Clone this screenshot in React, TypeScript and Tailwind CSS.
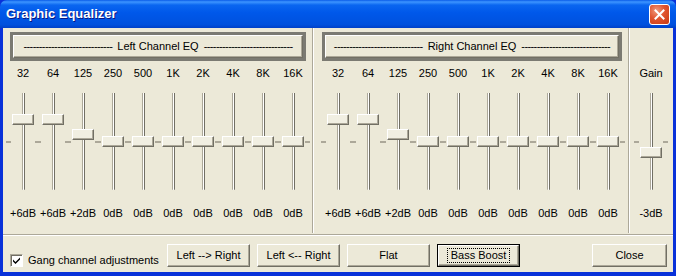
import React from 'react';

const FREQS = ['32', '64', '125', '250', '500', '1K', '2K', '4K', '8K', '16K'];
const LEFT = [6, 6, 2, 0, 0, 0, 0, 0, 0, 0];
const RIGHT = [6, 6, 2, 0, 0, 0, 0, 0, 0, 0];

function fmt(db: number) {
  return db > 0 ? `+${db}dB` : `${db}dB`;
}

function Slider({ label, db }: { label: string; db: number }) {
  // track 97px, thumb 11px, ±12dB
  const top = 43 - db * (44 / 12);
  return (
    <div className="flex flex-col items-center w-[30px]">
      <div className="h-[12px] leading-[12px]">{label}</div>
      <div className="relative mt-[14px] h-[97px] w-[30px]">
        <div className="absolute left-[14px] top-0 h-full w-[3px] border-l border-l-[#aca899] border-r border-r-[#716f64] bg-white rounded-b-[1px]" />
        <div className="absolute left-[-2px] top-[48px] h-[2px] w-[5px] bg-[#aca899]" />
        <div className="absolute right-[-2px] top-[48px] h-[2px] w-[5px] bg-[#aca899]" />
        <div
          className="absolute left-[4px] h-[11px] w-[22px] bg-[#f1efe2] border-t border-l border-t-white border-l-white border-b border-r border-b-[#716f64] border-r-[#716f64] shadow-[inset_-1px_-1px_0_#aca899]"
          style={{ top }}
        />
      </div>
      <div className="mt-[17px] h-[12px] leading-[12px]">{fmt(db)}</div>
    </div>
  );
}

function HeaderBox({ title, w }: { title: string; w: string }) {
  const dashes = '-----------------------------';
  return (
    <div className={`mt-[4px] h-[29px] border-[3px] border-[#7b7a72] ${w}`}>
      <div className="h-full w-full flex items-center justify-center gap-[5px] border-t border-l border-white border-b border-r border-b-[#716f64] border-r-[#716f64] shadow-[inset_-1px_-1px_0_#aca899] whitespace-nowrap">
        <span className="tracking-[-0.6px]">{dashes}</span>
        <span>{title}</span>
        <span className="tracking-[-0.6px]">{dashes}</span>
      </div>
    </div>
  );
}

function Btn({ children, w = 'w-[83px]', def = false }: { children: React.ReactNode; w?: string; def?: boolean }) {
  return (
    <div className={`h-[23px] ${w} ${def ? 'border border-black' : ''}`}>
      <div className="h-full w-full flex items-center justify-center border-t border-l border-white border-b border-r border-b-[#716f64] border-r-[#716f64] shadow-[inset_-1px_-1px_0_#aca899] bg-[#ece9d8]">
        {def ? (
          <span className="border border-dotted border-black px-[3px] leading-[13px]">{children}</span>
        ) : (
          <span>{children}</span>
        )}
      </div>
    </div>
  );
}

export default function App() {
  return (
    <div className="w-[676px] h-[276px] flex flex-col text-[11px] text-black bg-[#0831d9]" style={{ fontFamily: '"Liberation Sans", Arial, sans-serif' }}>
      {/* Title bar */}
      <div className="h-[28px] flex items-center justify-between pl-[6px] pr-[6px] rounded-t-[7px] bg-[linear-gradient(to_bottom,#0a5ce8_0%,#3d95ff_7%,#0a66f0_18%,#0058ea_45%,#0054e3_70%,#0050dd_88%,#0040c8_100%)]">
        <span className="text-white font-bold text-[13px] [text-shadow:1px_1px_0_#0a1883]">Graphic Equalizer</span>
        <div className="w-[21px] h-[21px] rounded-[3px] border border-white bg-[radial-gradient(circle_at_35%_30%,#f09a7c_0%,#e0542f_45%,#c83a12_100%)] flex items-center justify-center">
          <svg width="11" height="11" viewBox="0 0 11 11">
            <path d="M1.5 1.5 L9.5 9.5 M9.5 1.5 L1.5 9.5" stroke="white" strokeWidth="2" strokeLinecap="square" />
          </svg>
        </div>
      </div>

      {/* Client area */}
      <div className="flex-1 ml-[3px] mr-[3px] mb-[4px] bg-[#ece9d8] flex flex-col">
        <div className="h-[206px] flex">
          {/* Left panel */}
          <div className="w-[309px] flex flex-col">
            <div className="ml-[7px]">
              <HeaderBox title="Left Channel EQ" w="w-[296px]" />
            </div>
            <div className="flex mt-[6px] pl-[5px]">
              {FREQS.map((f, i) => (
                <Slider key={f} label={f} db={LEFT[i]} />
              ))}
            </div>
          </div>
          <div className="w-[2px] mb-[1px] border-l border-l-[#aca899] border-r border-r-white" />
          {/* Right panel */}
          <div className="w-[314px] flex flex-col">
            <div className="ml-[8px]">
              <HeaderBox title="Right Channel EQ" w="w-[300px]" />
            </div>
            <div className="flex mt-[6px] pl-[9px]">
              {FREQS.map((f, i) => (
                <Slider key={f} label={f} db={RIGHT[i]} />
              ))}
            </div>
          </div>
          <div className="w-[2px] mb-[1px] border-l border-l-[#aca899] border-r border-r-white" />
          {/* Gain */}
          <div className="flex-1 pl-[6px] pt-[39px]">
            <Slider label="Gain" db={-3} />
          </div>
        </div>
        <div className="h-[2px] border-t border-t-[#aca899] border-b border-b-white" />

        {/* Bottom row */}
        <div className="flex-1 flex items-start pt-[8px] pl-[7px] pr-[6px]">
          <label className="flex items-center mt-[8px] w-[157px]">
            <span className="w-[13px] h-[13px] border border-t-[#aca899] border-l-[#aca899] border-b-white border-r-white shadow-[inset_1px_1px_0_#716f64] bg-white flex items-center justify-center">
              <svg width="9" height="9" viewBox="0 0 9 9">
                <path d="M1 3.5 L3.5 6 L8 1.5 L8 3.5 L3.5 8 L1 5.5 Z" fill="black" />
              </svg>
            </span>
            <span className="ml-[5px]">Gang channel adjustments</span>
          </label>
          <div className="flex gap-[7px]">
            <Btn>Left --&gt; Right</Btn>
            <Btn>Left &lt;-- Right</Btn>
            <Btn>Flat</Btn>
            <Btn def>Bass Boost</Btn>
          </div>
          <div className="ml-auto">
            <Btn w="w-[75px]">Close</Btn>
          </div>
        </div>
      </div>
    </div>
  );
}
